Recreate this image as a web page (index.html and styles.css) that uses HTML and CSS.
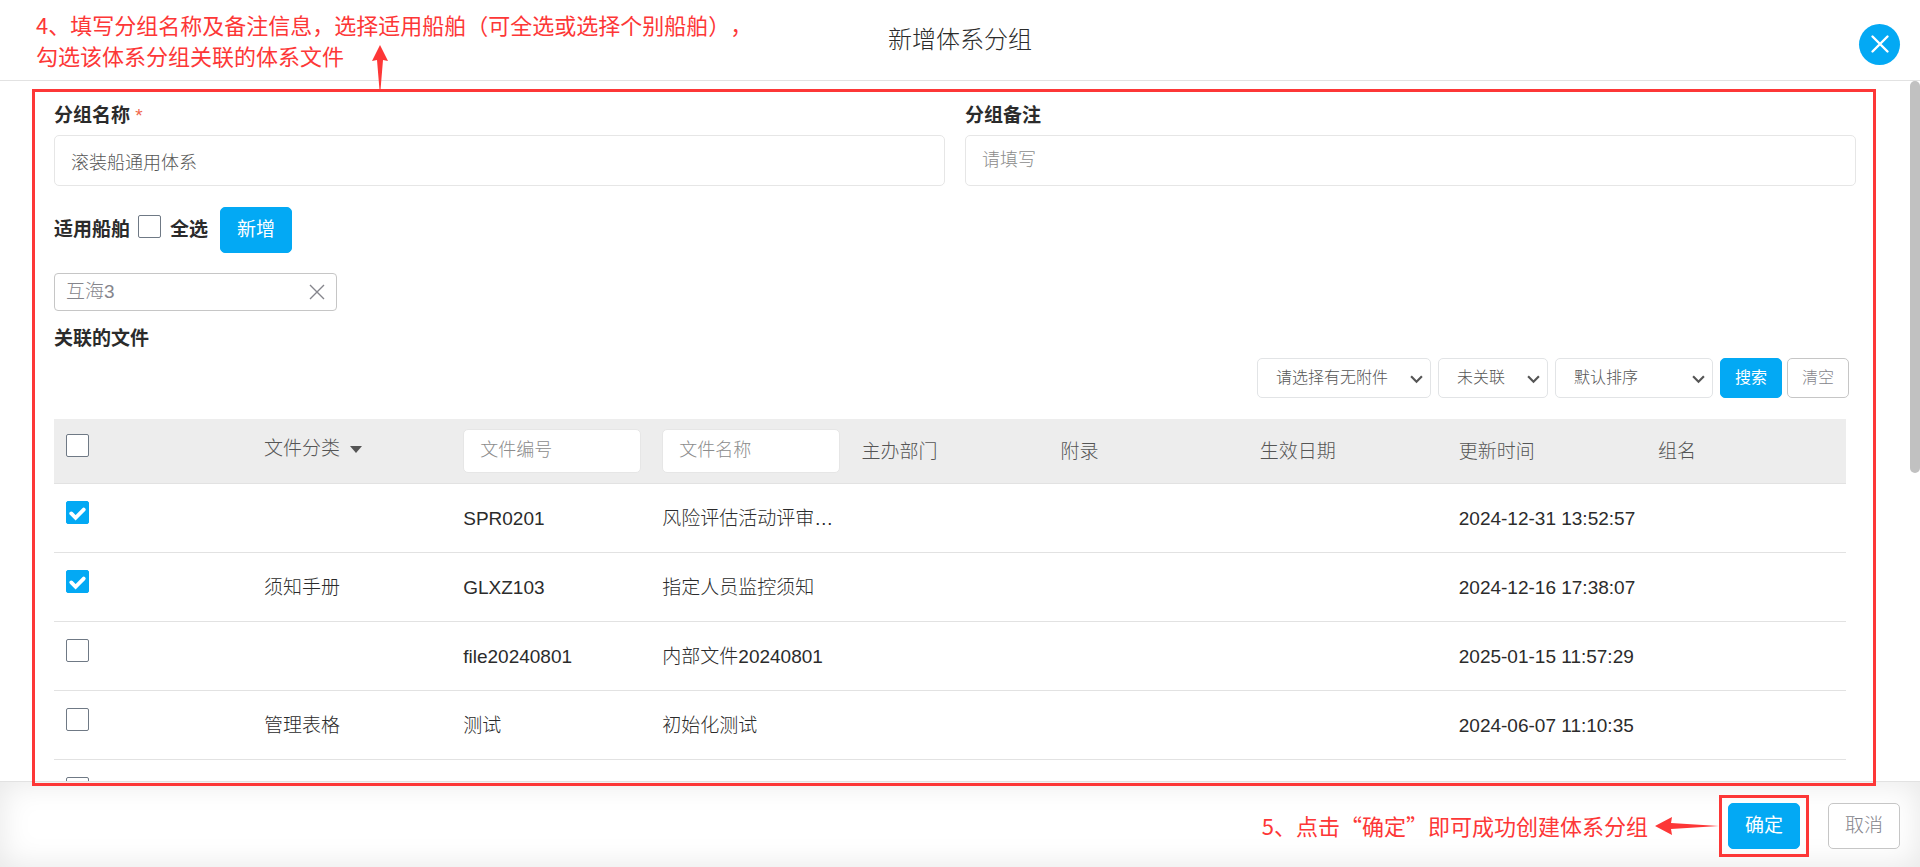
FILE: index.html
```html
<!DOCTYPE html>
<html lang="zh-CN">
<head>
<meta charset="utf-8">
<title>新增体系分组</title>
<link rel="stylesheet" href="styles.css">
</head>
<body>
<header class="header">
  <h1 class="title">新增体系分组</h1>
  <button class="close" type="button" aria-label="关闭">
    <svg width="20" height="20" viewBox="0 0 20 20"><path d="M2.500 2.500L17.500 17.500M17.500 2.500L2.500 17.500" stroke="#fff" stroke-width="2.400" stroke-linecap="round"/></svg>
  </button>
</header>

<main class="main">
  <form class="content" id="group-form">
    <div class="fields">
      <div class="field">
        <label class="label" for="name">分组名称 <span class="required">*</span></label>
        <input class="input" id="name" type="text" value="滚装船通用体系">
      </div>
      <div class="field">
        <label class="label" for="remark">分组备注</label>
        <input class="input" id="remark" type="text" placeholder="请填写">
      </div>
    </div>

    <div class="ships">
      <span class="label">适用船舶</span>
      <label class="all"><span class="check"><input type="checkbox"></span><span class="label">全选</span></label>
      <button class="btn btn-primary" type="button">新增</button>
    </div>

    <div class="tag">
      <span>互海3</span>
      <button class="tag-remove" type="button" aria-label="移除">
        <svg width="16" height="16" viewBox="0 0 16 16"><path d="M1 1L15 15M15 1L1 15" stroke="#85858c" stroke-width="1.4"/></svg>
      </button>
    </div>

    <h2 class="label section">关联的文件</h2>

    <div class="toolbar">
      <span class="select select-l"><select aria-label="附件"><option>请选择有无附件</option></select><svg class="arrow" viewBox="0 0 12 8"><path d="M1 1L6 6L11 1"/></svg></span>
      <span class="select select-s"><select aria-label="关联"><option>未关联</option></select><svg class="arrow" viewBox="0 0 12 8"><path d="M1 1L6 6L11 1"/></svg></span>
      <span class="select select-m"><select aria-label="排序"><option>默认排序</option></select><svg class="arrow" viewBox="0 0 12 8"><path d="M1 1L6 6L11 1"/></svg></span>
      <span class="actions">
        <button class="btn btn-small btn-primary" type="button">搜索</button>
        <button class="btn btn-small btn-plain" type="button">清空</button>
      </span>
    </div>

    <table class="table">
      <thead>
        <tr>
          <th class="pick"><span class="check"><input type="checkbox" aria-label="选择全部文件"></span></th>
          <th><button class="sort" type="button">文件分类<svg width="12" height="7" viewBox="0 0 12 7"><path d="M0 0H12L6 7Z" fill="#555"/></svg></button></th>
          <th class="search"><input class="filter" type="text" aria-label="文件编号" placeholder="文件编号"></th>
          <th class="search"><input class="filter" type="text" aria-label="文件名称" placeholder="文件名称"></th>
          <th>主办部门</th>
          <th>附录</th>
          <th>生效日期</th>
          <th>更新时间</th>
          <th>组名</th>
        </tr>
      </thead>
      <tbody>
        <tr>
          <td class="pick"><span class="check"><input type="checkbox" checked aria-label="选择 SPR0201"><svg viewBox="0 0 24 24"><path d="M5.5 13L10 17.500L18.500 9"/></svg></span></td>
          <td></td><td>SPR0201</td><td>风险评估活动评审…</td><td></td><td></td><td></td><td>2024-12-31 13:52:57</td><td></td>
        </tr>
        <tr>
          <td class="pick"><span class="check"><input type="checkbox" checked aria-label="选择 GLXZ103"><svg viewBox="0 0 24 24"><path d="M5.5 13L10 17.500L18.500 9"/></svg></span></td>
          <td>须知手册</td><td>GLXZ103</td><td>指定人员监控须知</td><td></td><td></td><td></td><td>2024-12-16 17:38:07</td><td></td>
        </tr>
        <tr>
          <td class="pick"><span class="check"><input type="checkbox" aria-label="选择 file20240801"></span></td>
          <td></td><td>file20240801</td><td>内部文件20240801</td><td></td><td></td><td></td><td>2025-01-15 11:57:29</td><td></td>
        </tr>
        <tr>
          <td class="pick"><span class="check"><input type="checkbox" aria-label="选择 测试"></span></td>
          <td>管理表格</td><td>测试</td><td>初始化测试</td><td></td><td></td><td></td><td>2024-06-07 11:10:35</td><td></td>
        </tr>
        <tr>
          <td class="pick"><span class="check"><input type="checkbox" aria-label="选择文件"></span></td>
          <td></td><td></td><td></td><td></td><td></td><td></td><td></td><td></td>
        </tr>
      </tbody>
    </table>
  </form>
  <div class="scrollbar"><div class="thumb"></div></div>
</main>

<footer class="footer">
  <p class="note">5、点击“确定”即可成功创建体系分组</p>
  <svg class="arrow-left" width="64" height="18" viewBox="0 0 64 18"><path d="M0 9L17 0L16 6L64 9L16 12L17 18Z" fill="#fd3737"/></svg>
  <span class="ring"><button class="btn btn-primary" type="submit" form="group-form">确定</button></span>
  <button class="btn btn-plain" type="button">取消</button>
</footer>

<div class="frame"></div>
<p class="note note-top">4、填写分组名称及备注信息，选择适用船舶（可全选或选择个别船舶），<br>勾选该体系分组关联的体系文件</p>
<svg class="arrow-up" width="16" height="45" viewBox="0 0 16 45"><path d="M8 0L16 16L11 15L8.500 45H7.500L5 15L0 16Z" fill="#fd3737"/></svg>
</body>
</html>
```
FILE: styles.css
```css
* {
  box-sizing: border-box;
}

body {
  margin: 0;
  height: 100vh;
  display: flex;
  flex-direction: column;
  overflow: hidden;
  position: relative;
  background: #fff;
  color: #2b2b2b;
  font: 300 19px/28px "Liberation Sans", "Noto Sans CJK SC", sans-serif;
}

button,
input,
select {
  font: inherit;
  color: inherit;
}

button {
  cursor: pointer;
}

.header {
  flex: none;
  display: grid;
  grid-template-columns: 1fr auto 1fr;
  align-items: center;
  padding: 8px 20px 0;
  height: 81px;
  border-bottom: 1px solid #e2e2e2;
}

.title {
  grid-column: 2;
  margin: 0;
  padding-bottom: 8px;
  font-size: 24px;
  line-height: 32px;
  font-weight: 300;
}

.close {
  justify-self: end;
  display: grid;
  place-items: center;
  width: 41px;
  height: 41px;
  padding: 0;
  border: 0;
  border-radius: 50%;
  background: #03a9f4;
}

.main {
  flex: 1;
  min-height: 0;
  display: flex;
  overflow: hidden;
}

.content {
  flex: 1;
  min-width: 0;
  padding: 21px 54px;
}

.fields {
  display: grid;
  grid-template-columns: 1fr 1fr;
  gap: 20px;
}

.field {
  display: flex;
  flex-direction: column;
  gap: 5px;
}

.label {
  font-size: 19px;
  font-weight: 700;
}

.required {
  color: #f0674c;
  font-weight: 400;
}

.input,
.filter {
  width: 100%;
  border: 1px solid #e6e6e6;
  border-radius: 5px;
  background: #fff;
  padding: 0 16px;
  font-size: 18px;
  color: #555;
}

.input {
  height: 51px;
}

.filter {
  display: block;
  height: 44px;
}

.input::placeholder,
.filter::placeholder {
  color: #8c8c8c;
}

.ships {
  display: flex;
  align-items: center;
  margin-top: 21px;
}

.all {
  display: flex;
  align-items: center;
  gap: 9px;
  margin: 0 12px 0 8px;
}

.check {
  position: relative;
  display: block;
  width: 23px;
  height: 23px;
}

.check input {
  appearance: none;
  display: block;
  width: 23px;
  height: 23px;
  margin: 0;
  border: 1px solid #6f7985;
  border-radius: 2px;
  background: #fff;
}

.check input:checked {
  background: #03a9f4;
  border-color: #03a9f4;
}

.check svg {
  position: absolute;
  inset: 0;
  fill: none;
  stroke: #fff;
  stroke-width: 4;
  stroke-linecap: round;
  pointer-events: none;
}

.ships .check {
  margin-bottom: 7px;
}

.btn {
  height: 46px;
  padding: 0 16px;
  border: 1px solid #03a9f4;
  border-radius: 5px;
  white-space: nowrap;
}

.btn-primary {
  background: #03a9f4;
  color: #fff;
  font-weight: 400;
}

.btn-plain {
  background: #fff;
  border-color: #c6c6c6;
  color: #85858c;
}

.btn-small {
  height: 40px;
  padding: 0 14px;
  font-size: 16px;
}

.tag {
  display: flex;
  align-items: center;
  justify-content: space-between;
  width: 283px;
  height: 38px;
  margin-top: 20px;
  padding: 0 11px;
  border: 1px solid #c6c6c6;
  border-radius: 4px;
  color: #85858c;
}

.tag-remove {
  display: grid;
  padding: 0;
  border: 0;
  background: none;
}

.section {
  margin: 14px 0 5px;
}

.toolbar {
  display: flex;
  justify-content: flex-end;
  gap: 7px;
  margin-right: 7px;
}

.select {
  position: relative;
}

.select select {
  appearance: none;
  width: 100%;
  height: 40px;
  padding: 0 18px;
  border: 1px solid #e2e4e6;
  border-radius: 5px;
  background: #fff;
  color: #555;
  font-size: 16px;
}

.select-l {
  width: 174px;
}

.select-s {
  width: 110px;
}

.select-m {
  width: 158px;
}

.arrow {
  position: absolute;
  right: 8px;
  top: 17px;
  width: 13px;
  height: 9px;
  fill: none;
  stroke: #555;
  stroke-width: 2;
  pointer-events: none;
}

.actions {
  display: flex;
  gap: 5px;
}

.table {
  width: calc(100% - 10px);
  margin-top: 21px;
  table-layout: fixed;
  border-collapse: collapse;
}

.table th,
.table td {
  padding: 3px 10px 0 11px;
  border-bottom: 1px solid #e2e2e2;
  text-align: left;
  font-weight: 300;
  white-space: nowrap;
}

.table th {
  height: 64px;
  background: #ededed;
  color: #555;
}

.table th.search {
  padding-top: 0;
}

.table td {
  height: 69px;
}

.table .pick {
  vertical-align: top;
  padding: 17px 12px 0;
}

.table th.pick {
  padding-top: 15px;
}

.sort {
  display: flex;
  align-items: center;
  gap: 10px;
  padding: 0 0 6px;
  border: 0;
  background: none;
}

.scrollbar {
  flex: none;
  width: 10px;
}

.thumb {
  height: 56%;
  border-radius: 5px;
  background: #c1c1c1;
}

.footer {
  flex: none;
  display: flex;
  align-items: center;
  justify-content: flex-end;
  height: 86px;
  padding: 2px 20px 0;
  border-top: 1px solid #e2e2e2;
  box-shadow: inset 0 0 32px rgba(0, 0, 0, 0.1);
}

.note {
  margin: 0;
  color: #fd3737;
  font-family: "Noto Sans CJK SC", sans-serif;
  font-size: 22px;
  line-height: 31px;
  font-weight: 400;
  text-spacing-trim: space-all;
}

.arrow-left {
  margin-left: 7px;
}

.ring {
  padding: 5px 6px;
  margin-right: 19px;
  border: 3px solid #fd3737;
}

.ring .btn {
  display: block;
}

.frame {
  position: absolute;
  inset: 89px 44px 81px 32px;
  border: 3px solid #fd3737;
  pointer-events: none;
}

.note-top {
  position: absolute;
  left: 36px;
  top: 9px;
}

.arrow-up {
  position: absolute;
  left: 372px;
  top: 45px;
}
```
